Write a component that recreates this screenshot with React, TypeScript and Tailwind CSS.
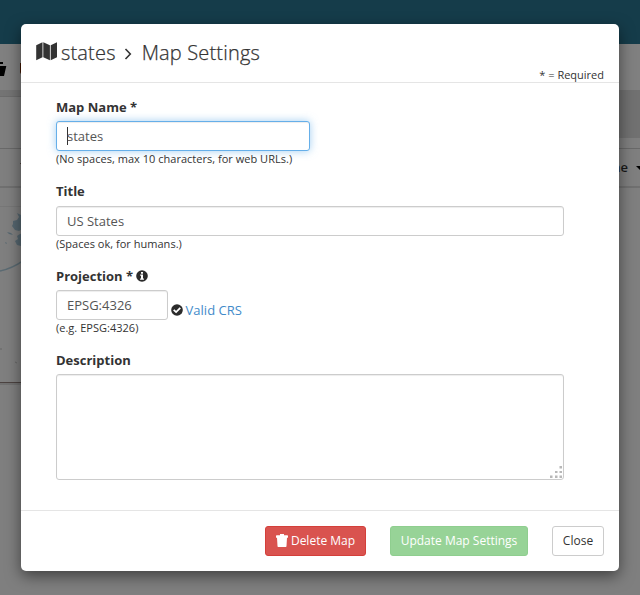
import React from "react";

function MapIcon() {
  return (
    <svg width="22" height="19" viewBox="0 0 22 19" className="mt-[18px] shrink-0" fill="#333">
      <path d="M0.2 3.2 L6.5 0.3 V15.3 L0.2 18.2Z M7.3 0.3 L13.9 3.2 V18.2 L7.3 15.3Z M14.7 3.2 L21 0.3 V15.3 L14.7 18.2Z" />
    </svg>
  );
}

function InfoIcon() {
  return (
    <svg width="12" height="12" viewBox="0 0 12 12" className="ml-[3px] shrink-0">
      <circle cx="6" cy="6" r="5.8" fill="#2b2b2b" />
      <path d="M5 2h2v1.7H5z M4.2 4.6H7v3.8h.9v1.3H4.1V8.4H5V5.8h-.8z" fill="#fff" />
    </svg>
  );
}

function CheckIcon() {
  return (
    <svg width="12" height="12" viewBox="0 0 12 12" className="mr-[3px] shrink-0">
      <circle cx="6" cy="6" r="5.8" fill="#2b2b2b" />
      <path d="M2.7 5.8 L5.1 8.1 L9.3 3.9" stroke="#fff" strokeWidth="1.8" fill="none" />
    </svg>
  );
}

function TrashIcon() {
  return (
    <svg width="12" height="13" viewBox="0 0 12 13" className="-mt-[2px] mr-[3px] shrink-0" fill="#fff">
      <path d="M4 0h4v1.2h3.3c.4 0 .7.3.7.7V3.8H0V1.9c0-.4.3-.7.7-.7H4z M1 3.8h10L10.5 12c0 .6-.4 1-1 1h-7c-.6 0-1-.4-1-1z" />
    </svg>
  );
}

function Backdrop() {
  return (
    <div className="flex h-[595px] flex-col bg-[#7f7f7f]">
      <div className="h-[44px] shrink-0 bg-[#153c4a]" />
      <div className="flex h-[46px] shrink-0 items-start bg-[#808080]">
        <svg width="24" height="30" viewBox="0 0 24 30" className="mt-[12px]">
          <path d="M0 6h3v2H0z M0 10h6.3L4 20H0z" fill="#000" />
          <path d="M24 7h-4v9q0 2 2 2h2z" fill="#401600" />
        </svg>
      </div>
      <div className="flex h-[98px] shrink-0 justify-between">
        <div className="flex w-[320px] flex-col">
          <div className="h-[6px] bg-[#747474]" />
          <div className="h-[52px] border-t border-[#6c6c6c] bg-[#7f7f7f]" />
          <div className="flex h-[40px] items-start border-t border-b-2 border-t-[#696969] border-b-[#707070]">
            <span className="ml-[20px] mt-[14px] h-0 w-0 border-x-[3px] border-t-[4px] border-x-transparent border-t-[#301c10]" />
          </div>
        </div>
        <div className="flex w-[320px] flex-col">
          <div className="h-[48px] bg-[#717171]" />
          <div className="h-[10px] bg-[#7f7f7f]" />
          <div className="flex h-[40px] items-center justify-end border-t border-b-2 border-t-[#696969] border-b-[#707070] text-[13px] font-semibold text-[#181818]">
            ne
            <span className="ml-[8px] -mr-[4px] h-0 w-0 border-x-4 border-t-4 border-x-transparent border-t-black" />
          </div>
        </div>
      </div>
      <div className="h-[195px] w-[320px] shrink-0 border-b border-[#4c4341]">
        <svg width="24" height="194" viewBox="0 188 24 194">
          <path d="M0 206.5H24" stroke="#777" />
          <path d="M24 213l-3 2-4-2 2 4-2 3-4 1v3l-1 2 3 4 4 1 5-3z M24 233l-4 1-3 2 1 3-3 2 2 4 4 1 3-1z M7 232l4 1 2 2-4-1z M5 242l2 1-1 1z" fill="#566770" />
          <path d="M0 271q13-3 24-11" fill="none" stroke="#5a6a72" strokeWidth="1.5" />
          <path d="M0 349h2 M15 362l2 1" stroke="#666" />
        </svg>
      </div>
      <div className="h-[2px] w-[320px] bg-[#717171]" />
    </div>
  );
}

const label = "flex h-[18px] items-center text-[13px] font-bold leading-[18px]";
const field =
  "block h-[30px] rounded-[3px] border border-[#ccc] bg-white px-[10px] text-[13px] leading-[28px] text-[#555] shadow-[inset_0_1px_1px_rgba(0,0,0,0.075)] outline-none";
const help = "h-[16px] whitespace-nowrap text-[11px] leading-[16px] tracking-[0.02px]";
const button = "flex h-[30px] items-center justify-center whitespace-nowrap rounded-[3px] border text-[12px] leading-[18px]";

export default function App() {
  return (
    <div className="relative h-[595px] w-[640px] overflow-hidden font-['Open_Sans','Noto_Sans',sans-serif] text-[#333]">
      <Backdrop />
      <div className="absolute left-[21px] top-[24px] flex h-[547px] w-[598px] flex-col rounded-[5px] bg-white shadow-[0_5px_15px_rgba(0,0,0,0.5)]">
        <header className="flex h-[59px] shrink-0 items-start justify-between border-b border-[#e5e5e5] pl-[15px] pr-[15px]">
          <h1 className="flex items-start text-[20px] font-light leading-[28px] tracking-[0.17px] [-webkit-text-stroke:0.25px_#333]">
            <MapIcon />
            <span className="ml-[3px] mt-[15px]">states</span>
            <svg width="8" height="12" viewBox="0 0 8 12" className="ml-[8px] mt-[24px]">
              <path d="M1.5 1 L6.3 6 L1.5 11" fill="none" stroke="#333" strokeWidth="1.6" />
            </svg>
            <span className="ml-[10px] mt-[15px]">Map Settings</span>
          </h1>
          <span className="mt-[43px] text-[11px] leading-[16px]">* = Required</span>
        </header>

        <main className="flex-1 px-[35px] pt-[15px]">
          <div className="mb-[15px]">
            <label className={label}>Map Name *</label>
            <div className="mt-[5px] flex h-[30px] w-[254px] items-center rounded-[3px] border border-[#66afe9] bg-white pl-[10px] text-[13px] text-[#555] shadow-[inset_0_1px_1px_rgba(0,0,0,0.075),0_0_8px_rgba(102,175,233,0.6)]">
              <span className="-mr-px h-[18px] w-px bg-[#333]" />
              <span className="pt-[2px]">states</span>
            </div>
            <p className={help}>(No spaces, max 10 characters, for web URLs.)</p>
          </div>
          <div className="mb-[15px]">
            <label className={label}>Title</label>
            <input className={field + " mt-[6px] w-[508px]"} defaultValue="US States" />
            <p className={help}>(Spaces ok, for humans.)</p>
          </div>
          <div className="mb-[15px]">
            <label className={label}>
              Projection *<InfoIcon />
            </label>
            <div className="mt-[5px] flex items-start">
              <input className={field + " w-[112px]"} defaultValue="EPSG:4326" />
              <span className="ml-[2.6px] mt-[11px] flex items-center text-[13px] leading-[18px] text-[#428bca]">
                <CheckIcon />
                Valid CRS
              </span>
            </div>
            <p className={help}>(e.g. EPSG:4326)</p>
          </div>
          <div>
            <label className={label}>Description</label>
            <div className="mt-[5px] flex h-[106px] w-[508px] items-end justify-end rounded-[3px] border border-[#ccc] shadow-[inset_0_1px_1px_rgba(0,0,0,0.075)]">
              <svg width="14" height="14" viewBox="0 0 14 14" fill="#b8b8b8">
                <path d="M10.5 1h2.5v2.5h-2.5z M6 6h2.5v2H6z M10.5 6h2.5v2h-2.5z M1 10.5h2.5v2.5H1z M6 10.5h2.5v2.5H6z M10.5 10.5h2.5v2.5h-2.5z" />
              </svg>
            </div>
          </div>
        </main>

        <footer className="flex h-[61px] shrink-0 items-start justify-end border-t border-[#e5e5e5] pr-[15px] pt-[15px]">
          <button className={button + " w-[101px] border-[#d43f3a] bg-[#d9534f] text-white"}>
            <TrashIcon />
            Delete Map
          </button>
          <button className={button + " ml-[24px] w-[138px] border-[#8fce8f] bg-[#97d397] text-white"}>Update Map Settings</button>
          <button className={button + " ml-[24px] w-[52px] border-[#ccc] bg-white"}>Close</button>
        </footer>
      </div>
    </div>
  );
}
